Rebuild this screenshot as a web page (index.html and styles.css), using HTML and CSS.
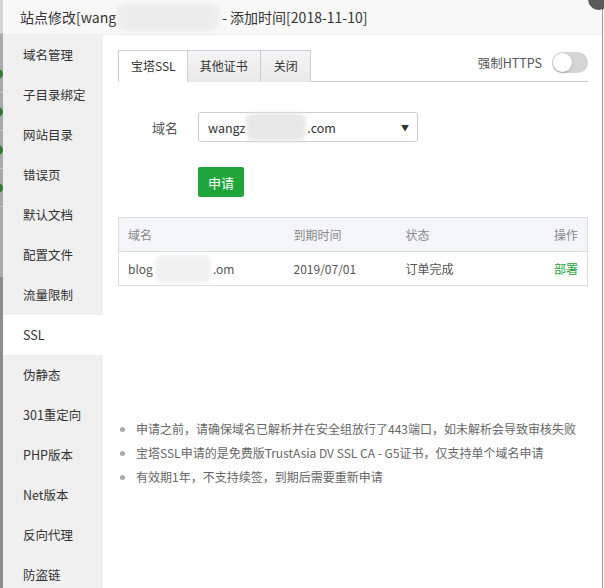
FILE: index.html
```html
<!DOCTYPE html>
<html lang="zh-CN">
<head>
<meta charset="utf-8">
<title>站点修改</title>
<link rel="stylesheet" href="styles.css">
</head>
<body>
<div class="screen">
  <div class="backdrop">
    <div class="bd-top"></div>
    <div class="bd-rows">
      <div class="bd-row"><span class="dot"></span></div>
      <div class="bd-row"><span class="dot"></span></div>
      <div class="bd-row"><span class="dot"></span></div>
      <div class="bd-row"><span class="dot"></span></div>
    </div>
    <div class="bd-rest"></div>
    <div class="bd-dark"></div>
  </div>
  <div class="dialog">
    <div class="title">站点修改[wang<span class="blur blur-title"></span>- 添加时间[2018-11-10]</div>
    <span class="close-btn"></span>
    <div class="body">
      <ul class="menu">
        <li>域名管理</li>
        <li>子目录绑定</li>
        <li>网站目录</li>
        <li>错误页</li>
        <li>默认文档</li>
        <li>配置文件</li>
        <li>流量限制</li>
        <li class="active">SSL</li>
        <li>伪静态</li>
        <li>301重定向</li>
        <li>PHP版本</li>
        <li>Net版本</li>
        <li>反向代理</li>
        <li>防盗链</li>
      </ul>
      <div class="main">
        <div class="tabs">
          <span class="tab on">宝塔SSL</span>
          <span class="tab">其他证书</span>
          <span class="tab">关闭</span>
          <div class="force">
            <span class="force-label">强制HTTPS</span>
            <span class="switch"><span class="knob"></span></span>
          </div>
        </div>
        <div class="line">
          <span class="tname">域名</span>
          <div class="select">
            <span class="sel-text">wangz<span class="blur blur-sel"></span>.com</span>
            <span class="arrow">▼</span>
          </div>
        </div>
        <div class="line btn-line">
          <span class="tname"></span>
          <button class="btn">申请</button>
        </div>
        <table class="tbl">
          <thead>
            <tr><th class="c1">域名</th><th class="c2">到期时间</th><th class="c3">状态</th><th class="c4">操作</th></tr>
          </thead>
          <tbody>
            <tr><td>blog<span class="blur blur-tbl"></span>.om</td><td>2019/07/01</td><td>订单完成</td><td class="c4"><span class="link">部署</span></td></tr>
          </tbody>
        </table>
        <ul class="notes">
          <li>申请之前，请确保域名已解析并在安全组放行了443端口，如未解析会导致审核失败</li>
          <li>宝塔SSL申请的是免费版TrustAsia DV SSL CA - G5证书，仅支持单个域名申请</li>
          <li>有效期1年，不支持续签，到期后需要重新申请</li>
        </ul>
      </div>
    </div>
  </div>
</div>
</body>
</html>
```

FILE: styles.css
```css
* { box-sizing: border-box; }
html, body {
  margin: 0;
  padding: 0;
  width: 604px;
  height: 588px;
  overflow: hidden;
  background: #fff;
  font-family: "Noto Sans CJK SC", "Liberation Sans", sans-serif;
}
.screen {
  display: flex;
  width: 604px;
  height: 588px;
  position: relative;
  overflow: hidden;
}
.backdrop {
  width: 3px;
  flex: none;
  display: flex;
  flex-direction: column;
  background: #a9a9a9;
}
.bd-top { flex: none; height: 34px; background: #d6d6d6; border-bottom: 1px solid #bbb; }
.bd-rows { flex: none; display: flex; flex-direction: column; padding-top: 21px; }
.bd-row {
  flex: none;
  height: 38px;
  border-bottom: 1px solid #c4c4c4;
  display: flex;
  align-items: center;
}
.dot {
  width: 10px; height: 10px; border-radius: 50%;
  background: #2f7d32;
  margin-left: -7px;
}
.bd-rest { flex: none; height: 70px; }
.bd-dark { flex: 1; background: #8d8d8d; }

.dialog {
  flex: 1;
  display: flex;
  flex-direction: column;
  border-right: 1px solid #9a9a9a;
  margin-right: 1px;
  background: #fff;
  min-height: 0;
}
.title {
  flex: none;
  height: 35px;
  padding-left: 17px;
  background: #f8f8f8;
  border-bottom: 1px solid #eee;
  font-size: 14px;
  color: #333;
  white-space: nowrap;
  display: flex;
  align-items: center;
}
.close-btn {
  position: absolute;
  right: -6px;
  top: -12px;
  width: 22px;
  height: 22px;
  border-radius: 50%;
  background: #5a5a5a;
}
.blur {
  display: inline-block;
  filter: blur(2px);
  border-radius: 8px;
}
.blur-title { width: 102px; height: 26px; margin: 0 3px 0 1px; background: #ececec; }
.blur-sel { width: 60px; height: 28px; margin: 0 1px; background: #e8e8e8; }
.blur-tbl { width: 56px; height: 28px; margin: 0 2px; background: #f0f0f0; }

.body { flex: none; display: flex; }
.menu {
  list-style: none;
  margin: 0;
  padding: 0;
  width: 100px;
  flex: none;
  background: #f0f0f0;
}
.menu li {
  height: 40px;
  line-height: 40px;
  padding-left: 20px;
  font-size: 12.5px;
  color: #333;
}
.menu li.active { background: #fff; }

.main {
  flex: 1;
  padding: 15px 14px 0 15px;
  color: #555;
}
.tabs {
  display: flex;
  align-items: flex-end;
  height: 32px;
  border-bottom: 1px solid #ccd;
}
.tab {
  height: 32px;
  line-height: 30px;
  padding: 0 12px;
  border: 1px solid #ccd;
  border-bottom: none;
  margin-right: -1px;
  margin-bottom: -1px;
  background: linear-gradient(#f5f5f5, #e9e9e9);
  font-size: 12px;
  color: #333;
}
.tab:first-child { padding: 0 11px 0 12px; }
.tab:nth-child(3) { padding: 0 12px 0 13px; }
.tab.on {
  background: #fff;
  border-bottom: 1px solid #fff;
}
.force {
  margin-left: auto;
  display: flex;
  align-items: center;
  align-self: flex-start;
  height: 22px;
  margin-top: 1px;
}
.force-label { font-size: 12.5px; color: #555; margin-right: 10px; }
.switch {
  width: 36px;
  height: 21px;
  border-radius: 11px;
  background: #d4d4d4;
  position: relative;
  display: inline-block;
}
.knob {
  position: absolute;
  left: 1px;
  top: 1px;
  width: 19px;
  height: 19px;
  border-radius: 50%;
  background: #fff;
  box-shadow: 0 1px 2px rgba(0,0,0,0.25);
}

.line {
  display: flex;
  align-items: center;
  margin-top: 30px;
}
.tname {
  width: 80px;
  padding-right: 20px;
  text-align: right;
  font-size: 13px;
  color: #555;
  flex: none;
}
.select {
  width: 220px;
  height: 30px;
  border: 1px solid #ccc;
  border-radius: 3px;
  display: flex;
  align-items: center;
  padding: 0 8px 0 9px;
  font-size: 12.5px;
  color: #333;
}
.sel-text { flex: 1; display: flex; align-items: center; }
.arrow { font-size: 8px; color: #333; }
.btn-line { margin-top: 25px; }
.btn {
  width: 46px;
  height: 30px;
  border: none;
  border-radius: 2px;
  background: #20a53a;
  color: #fff;
  font-family: inherit;
  font-size: 13px;
  padding: 0;
}

.tbl {
  width: 470px;
  margin-top: 20px;
  border-collapse: collapse;
  border: 1px solid #ddd;
  font-size: 12px;
}
.tbl th {
  height: 34px;
  background: #f4f5f9;
  font-weight: normal;
  color: #888;
  text-align: left;
  padding: 0 9px;
  border-bottom: 1px solid #ddd;
  font-size: 12px;
}
.tbl td {
  height: 33px;
  color: #555;
  padding: 0 9px;
  white-space: nowrap;
}
.tbl td:first-child { display: flex; align-items: center; }
.c1 { width: 166px; }
.c2 { width: 112px; }
.c4 { text-align: right !important; }
.link { color: #20a53a; }

.notes {
  margin: 131px 0 0 0;
  padding-left: 18px;
  font-size: 12px;
  color: #666;
  list-style: disc outside;
}
.notes li {
  line-height: 24px;
  white-space: nowrap;
}
.notes li::marker { color: #aaa; }
```
